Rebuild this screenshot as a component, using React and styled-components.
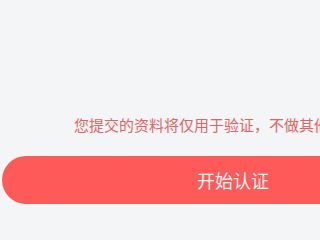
import React from 'react';
import styled, { createGlobalStyle } from 'styled-components';

const GlobalStyle = createGlobalStyle`
  html, body {
    margin: 0;
    padding: 0;
    background: #f4f5f7;
    overflow: hidden;
  }
  body {
    font-family: "Noto Sans CJK SC", "Noto Sans", sans-serif;
  }
`;

const Page = styled.div`
  width: 100%;
  min-height: 100vh;
  overflow: hidden;
  padding-top: 114px;
  box-sizing: border-box;
  background: #f4f5f7;
`;

const Notice = styled.p`
  margin: 0 0 20px 74px;
  font-size: 15px;
  line-height: 22px;
  color: #e06464;
  white-space: nowrap;
`;

const StartButton = styled.button`
  display: flex;
  align-items: center;
  justify-content: center;
  flex-shrink: 0;
  margin-left: 2px;
  width: 462px;
  min-width: 462px;
  height: 48px;
  border: none;
  border-radius: 24px;
  background: #ff5a5a;
  color: #fff6f6;
  font-family: inherit;
  font-size: 18px;
  padding: 0;
  cursor: pointer;
`;

export default function App() {
  return (
    <>
      <GlobalStyle />
      <Page>
        <Notice>您提交的资料将仅用于验证，不做其他用途</Notice>
        <StartButton>开始认证</StartButton>
      </Page>
    </>
  );
}
